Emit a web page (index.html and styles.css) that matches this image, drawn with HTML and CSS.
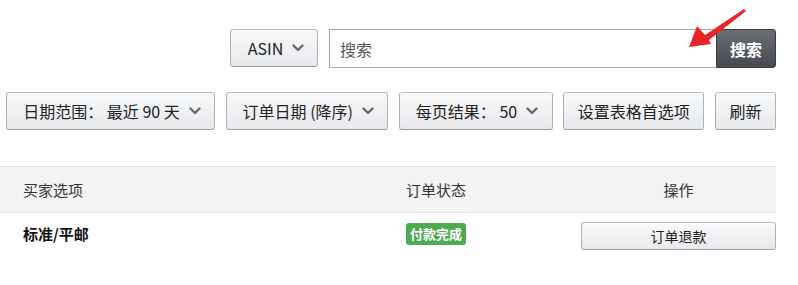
FILE: index.html
```html
<!DOCTYPE html>
<html lang="zh-CN">
<head>
<meta charset="utf-8">
<title>订单</title>
<link rel="stylesheet" href="styles.css">
</head>
<body>
<div class="page">
  <div class="search-row">
    <button class="btn btn-select asin">ASIN <svg class="chev" viewBox="0 0 12 8"><polyline points="1.5,1.5 6,6 10.5,1.5"/></svg></button>
    <div class="search-box">
      <input class="search-input" type="text" placeholder="搜索">
      <button class="search-btn">搜索</button>
    </div>
    <svg class="arrow" viewBox="0 0 60 45" width="60" height="45">
      <polygon points="57,2 59,4 22,33 24,37 2,40 10,19 18,28" fill="#e8262a"/>
    </svg>
  </div>
  <div class="filter-row">
    <button class="btn btn-select f1">日期范围：&nbsp;最近 90 天 <svg class="chev" viewBox="0 0 12 8"><polyline points="1.5,1.5 6,6 10.5,1.5"/></svg></button>
    <button class="btn btn-select f2">订单日期 (降序) <svg class="chev" viewBox="0 0 12 8"><polyline points="1.5,1.5 6,6 10.5,1.5"/></svg></button>
    <button class="btn btn-select f3">每页结果：&nbsp;50 <svg class="chev" viewBox="0 0 12 8"><polyline points="1.5,1.5 6,6 10.5,1.5"/></svg></button>
    <button class="btn f4">设置表格首选项</button>
    <button class="btn f5">刷新</button>
  </div>
  <div class="table">
    <div class="thead">
      <div class="cell c1">买家选项</div>
      <div class="cell c2">订单状态</div>
      <div class="cell c3">操作</div>
    </div>
    <div class="trow">
      <div class="cell c1 strong">标准/平邮</div>
      <div class="cell c2"><span class="badge">付款完成</span></div>
      <div class="cell c3"><button class="btn small">订单退款</button></div>
    </div>
  </div>
</div>
</body>
</html>
```

FILE: styles.css
```css
* { box-sizing: border-box; }
html, body { margin: 0; padding: 0; background: #fff; }
body {
  font-family: "Noto Sans CJK SC", "Noto Sans", sans-serif;
  color: #222;
}
.page { width: 776px; padding-top: 29px; }

.search-row {
  position: relative;
  display: flex;
  justify-content: flex-end;
  gap: 11px;
  height: 38px;
}
.btn {
  font-family: inherit;
  font-size: 16px;
  color: #222;
  height: 38px;
  padding: 0 14px;
  background: linear-gradient(to bottom, #f8f9fa, #e8e9ec);
  border: 1px solid #adb1b8;
  border-color: #b8bbc1 #adb1b8 #9a9ea5;
  border-radius: 3px;
  box-shadow: 0 1px 0 rgba(255,255,255,0.6) inset;
  display: inline-flex;
  align-items: center;
  justify-content: center;
  white-space: nowrap;
  line-height: 1;
}
.btn-select { padding: 0 12px 0 15px; }
.chev {
  width: 12px;
  height: 8px;
  margin-left: 9px;
  fill: none;
  stroke: #6a6a6a;
  stroke-width: 2.4;
  stroke-linecap: round;
  stroke-linejoin: round;
}
.asin { width: 88px; padding-left: 16px; }

.search-box { display: flex; height: 39px; }
.search-input {
  width: 387px;
  height: 39px;
  border: 1px solid #a6a6a6;
  border-right: none;
  border-radius: 0;
  font-family: inherit;
  font-size: 16px;
  padding: 0 10px;
  outline: none;
  color: #333;
}
.search-input::placeholder { color: #555; }
.search-btn {
  width: 60px;
  height: 39px;
  border: 1px solid #3a3e43;
  border-radius: 0 3px 3px 0;
  background: linear-gradient(to bottom, #6b6f75, #454a50);
  color: #fff;
  font-family: inherit;
  font-size: 16px;
  font-weight: bold;
  padding: 0;
}
.arrow {
  position: absolute;
  left: 687px;
  top: -22px;
}

.filter-row {
  display: flex;
  justify-content: space-between;
  margin-top: 25px;
  padding-left: 6px;
  height: 38px;
}
.f1 { width: 209px; }
.f2 { width: 162px; }
.f3 { width: 154px; }
.f4 { width: 141px; }
.f5 { width: 61px; }

.table { margin-top: 36px; }
.thead, .trow {
  display: grid;
  grid-template-columns: 390px 191px 195px;
}
.thead {
  height: 47px;
  background: #f3f3f4;
  border-top: 1px solid #e3e3e3;
  border-bottom: 1px solid #e3e3e3;
  align-items: center;
  font-size: 15px;
  color: #333;
}
.trow {
  height: 46px;
  padding-top: 9px;
  align-items: start;
  font-size: 15px;
}
.cell.c1 { padding-left: 23px; }
.cell.c2 { padding-left: 16px; }
.cell.c3 { text-align: center; }
.thead .cell { line-height: 20px; }
.strong { font-weight: bold; color: #111; line-height: 24px; }
.badge {
  display: inline-block;
  background: #4caa50;
  color: #fff;
  font-size: 13px;
  font-weight: bold;
  line-height: 22px;
  height: 22px;
  padding: 0 4px;
  border-radius: 3px;
  margin-top: 1px;
}
.btn.small {
  width: 195px;
  height: 28px;
  font-size: 14px;
  border-color: #b4b7bd #adb1b8 #9a9ea5;
}
```
